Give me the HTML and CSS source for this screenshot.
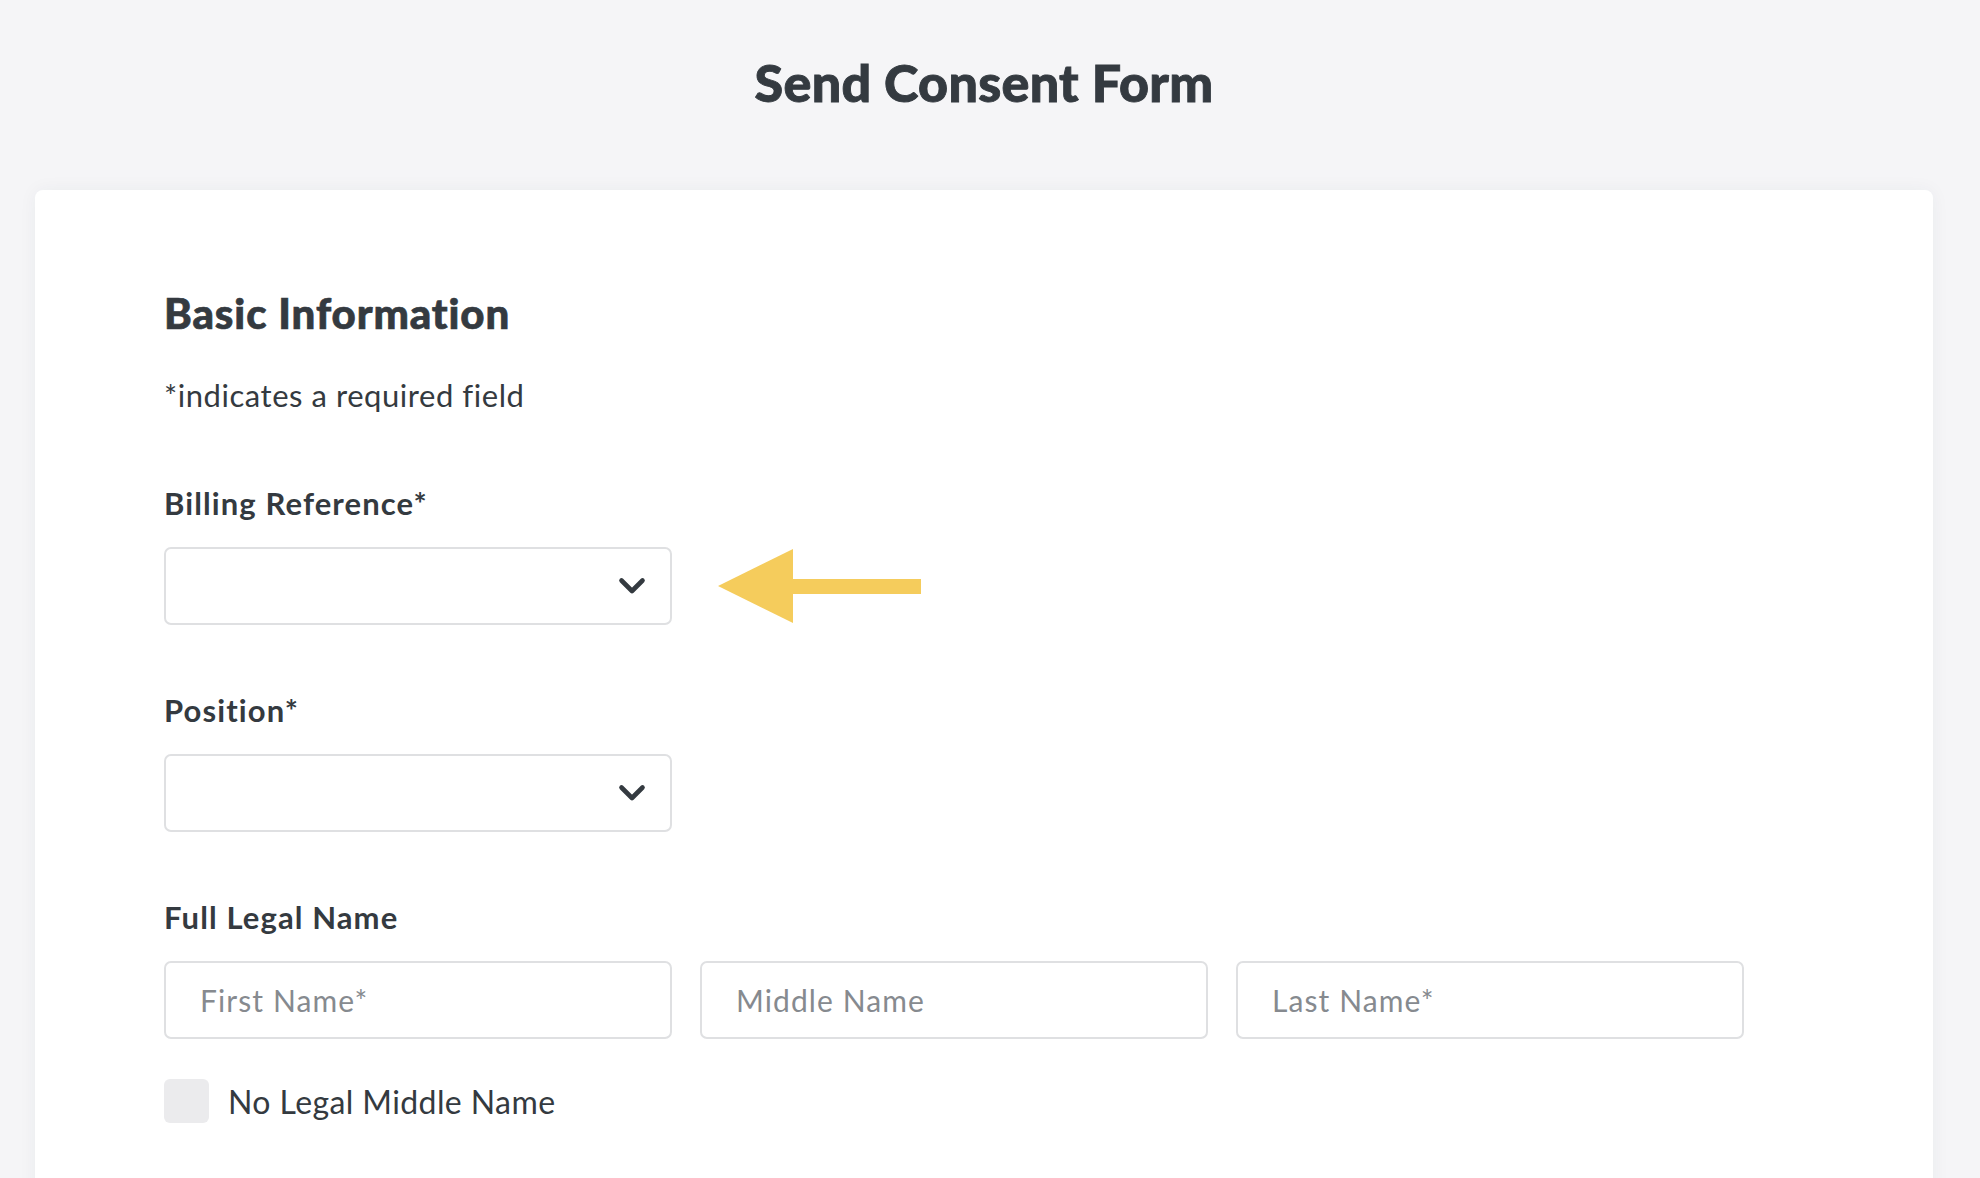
FILE: index.html
```html
<!DOCTYPE html>
<html lang="en">
<head>
<meta charset="utf-8">
<title>Send Consent Form</title>
<link rel="stylesheet" href="styles.css">
</head>
<body>
<main class="page">
  <h1 class="page-title">Send Consent Form</h1>
  <section class="card">
    <h2 class="section-title">Basic Information</h2>
    <p class="hint">*indicates a required field</p>

    <div class="field">
      <label class="field-label">Billing Reference*</label>
      <div class="select-row">
        <div class="select">
          <svg class="chevron" width="28" height="18" viewBox="0 0 28 18"><polyline points="3.5,3.5 14,14 24.5,3.5" fill="none" stroke="#343a40" stroke-width="4.6" stroke-linecap="round" stroke-linejoin="round"/></svg>
        </div>
        <svg class="arrow" width="203" height="74" viewBox="0 0 203 74"><polygon points="0,37 75,0 75,74" fill="#f5cc5c"/><rect x="74" y="30" width="129" height="15" fill="#f5cc5c"/></svg>
      </div>
    </div>

    <div class="field">
      <label class="field-label">Position*</label>
      <div class="select">
        <svg class="chevron" width="28" height="18" viewBox="0 0 28 18"><polyline points="3.5,3.5 14,14 24.5,3.5" fill="none" stroke="#343a40" stroke-width="4.6" stroke-linecap="round" stroke-linejoin="round"/></svg>
      </div>
    </div>

    <div class="field">
      <label class="field-label">Full Legal Name</label>
      <div class="name-row">
        <div class="input">First Name*</div>
        <div class="input">Middle Name</div>
        <div class="input">Last Name*</div>
      </div>
    </div>

    <div class="check-row">
      <span class="checkbox"></span>
      <span class="check-label">No Legal Middle Name</span>
    </div>
  </section>
</main>
</body>
</html>
```

FILE: styles.css
```css
* { box-sizing: border-box; }

html, body {
  margin: 0;
  padding: 0;
  background: #f5f5f7;
  height: 100%;
  overflow: hidden;
}

body {
  font-family: "Lato", "Open Sans", sans-serif;
  color: #343a40;
}

.page {
  padding: 0 47px 0 35px;
}

.page-title {
  margin: 0;
  padding-top: 51px;
  text-align: center;
  font-size: 52px;
  line-height: 62px;
  font-weight: 900;
  color: #343a40;
  letter-spacing: 0.3px;
  -webkit-text-stroke: 0.9px #343a40;
}

.card {
  margin-top: 77px;
  background: #fff;
  border-radius: 8px;
  box-shadow: 0 0 18px rgba(40, 50, 70, 0.05);
  padding: 98px 130px 200px 129px;
  min-height: 1100px;
}

.section-title {
  margin: 0;
  font-size: 42px;
  line-height: 50px;
  font-weight: 900;
  letter-spacing: 0.9px;
  -webkit-text-stroke: 0.7px #343a40;
}

.hint {
  margin: 38px 0 0;
  font-size: 31px;
  line-height: 38px;
  font-weight: 400;
  letter-spacing: 0.55px;
}

.field {
  margin-top: 67px;
}

.hint + .field {
  margin-top: 71px;
}

.field-label {
  display: block;
  font-size: 31px;
  line-height: 36px;
  font-weight: 700;
  letter-spacing: 1.1px;
  margin-bottom: 26px;
}

.select-row {
  display: flex;
  align-items: center;
  gap: 46px;
}

.select {
  width: 508px;
  height: 78px;
  border: 2px solid #dfe0e2;
  border-radius: 7px;
  display: flex;
  align-items: center;
  justify-content: flex-end;
  padding-right: 24px;
}

.arrow { display: block; }

.name-row {
  display: flex;
  gap: 28px;
}

.input {
  width: 508px;
  height: 78px;
  border: 2px solid #dfe0e2;
  border-radius: 7px;
  display: flex;
  align-items: center;
  padding-left: 34px;
  font-size: 30px;
  letter-spacing: 1.1px;
  color: #868a8f;
}

.check-row {
  margin-top: 40px;
  display: flex;
  align-items: center;
  gap: 19px;
}

.checkbox {
  width: 45px;
  height: 44px;
  border-radius: 6px;
  background: #ebebed;
}

.check-label {
  font-size: 32px;
  letter-spacing: 0.4px;
  color: #343a40;
}
```
